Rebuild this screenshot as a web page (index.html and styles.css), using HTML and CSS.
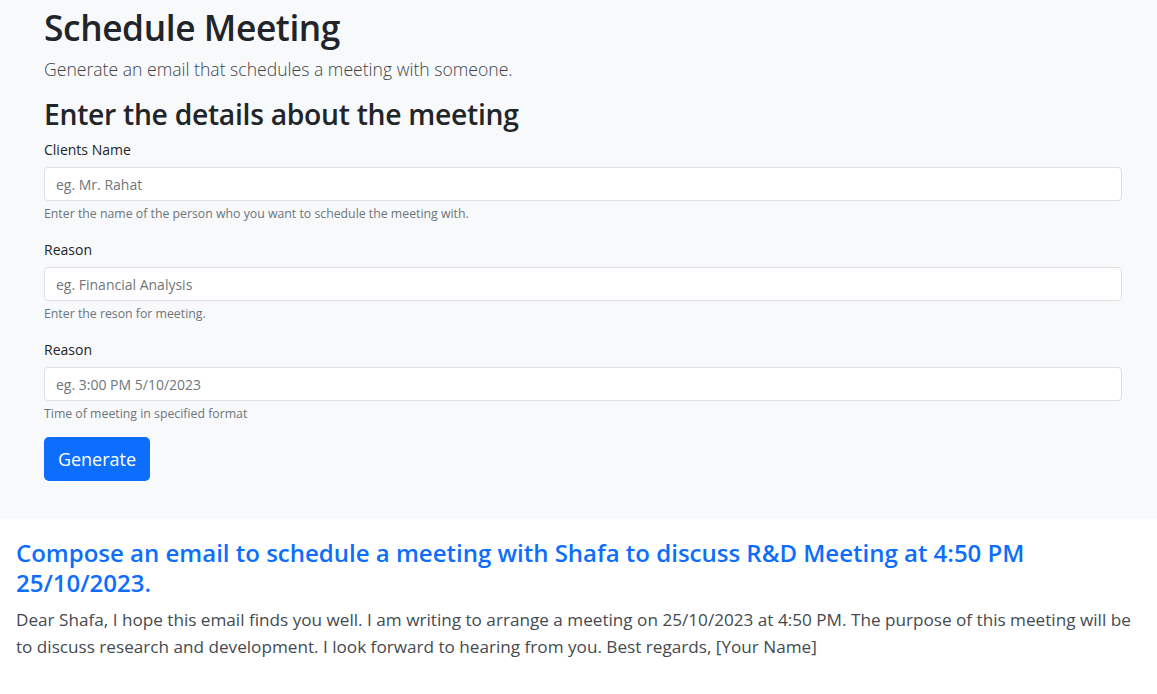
FILE: index.html
```html
<!DOCTYPE html>
<html lang="en">
<head>
<meta charset="utf-8">
<title>Schedule Meeting</title>
<link rel="stylesheet" href="styles.css">
</head>
<body>
<main class="panel">
  <h1 class="title">Schedule Meeting</h1>
  <p class="lead">Generate an email that schedules a meeting with someone.</p>
  <h2 class="subtitle">Enter the details about the meeting</h2>
  <form class="form">
    <div class="field">
      <label class="label" for="name">Clients Name</label>
      <input class="control" id="name" type="text" placeholder="eg. Mr. Rahat">
      <div class="help">Enter the name of the person who you want to schedule the meeting with.</div>
    </div>
    <div class="field">
      <label class="label" for="reason">Reason</label>
      <input class="control" id="reason" type="text" placeholder="eg. Financial Analysis">
      <div class="help">Enter the reson for meeting.</div>
    </div>
    <div class="field">
      <label class="label" for="time">Reason</label>
      <input class="control" id="time" type="text" placeholder="eg. 3:00 PM 5/10/2023">
      <div class="help">Time of meeting in specified format</div>
    </div>
    <button class="btn" type="button">Generate</button>
  </form>
</main>
<section class="result">
  <h3 class="result-title">Compose an email to schedule a meeting with Shafa to discuss R&amp;D Meeting at 4:50 PM 25/10/2023.</h3>
  <p class="result-text">Dear Shafa, I hope this email finds you well. I am writing to arrange a meeting on 25/10/2023 at 4:50 PM. The purpose of this meeting will be to discuss research and development. I look forward to hearing from you. Best regards, [Your Name]</p>
</section>
</body>
</html>
```

FILE: styles.css
```css
* { box-sizing: border-box; }
html, body { margin: 0; padding: 0; background: #fff; }
body {
  font-family: "Open Sans", "Noto Sans", sans-serif;
  color: #212529;
  width: 1157px;
}
.panel {
  background: #f8f9fa;
  padding: 4px 35px 38px 44px;
}
.title {
  margin: 0;
  font-size: 35.3px;
  line-height: 46px;
  font-weight: 600;
  letter-spacing: -0.4px;
}
.lead {
  margin: 6px 0 0;
  font-size: 17.6px;
  line-height: 26px;
  font-weight: 300;
  color: #3f444a;
}
.subtitle {
  margin: 14px 0 0;
  font-size: 28.3px;
  line-height: 36px;
  font-weight: 600;
  letter-spacing: -0.3px;
}
.form { display: flex; flex-direction: column; margin-top: 8px; }
.field { display: flex; flex-direction: column; height: 100px; }
.label {
  font-size: 14px;
  line-height: 20px;
  margin-bottom: 7px;
}
.control {
  height: 34px;
  border: 1px solid #dcdfe3;
  border-radius: 4px;
  background: #fff;
  padding: 0 11px;
  font-family: inherit;
  font-size: 14px;
  color: #212529;
}
.control::placeholder { color: #70767c; }
.help {
  margin-top: 4px;
  font-size: 12.3px;
  line-height: 18px;
  color: #6c757d;
}
.btn {
  align-self: flex-start;
  margin-top: -3px;
  width: 106px;
  height: 44px;
  border: 0;
  border-radius: 5px;
  background: #0d6efd;
  color: #fff;
  font-family: inherit;
  font-size: 18px;
}
.result { padding: 19px 16px 0; }
.result-title {
  margin: 0;
  color: #0d6efd;
  font-size: 24px;
  line-height: 30px;
  font-weight: 600;
}
.result-text {
  margin: 8px 0 0;
  font-size: 17.15px;
  line-height: 27px;
  color: #444a50;
}
```
